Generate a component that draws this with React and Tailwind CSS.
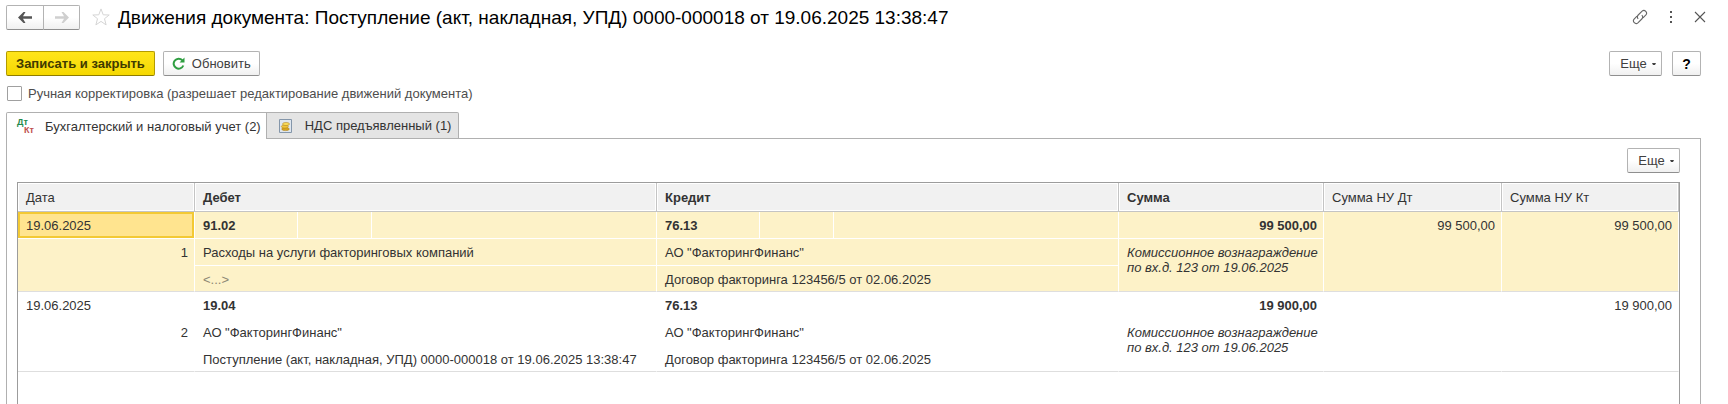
import React from 'react';

const entries = [
  {
    id: 1,
    date: '19.06.2025',
    debit: { account: '91.02', lines: ['Расходы на услуги факторинговых компаний', '<...>'] },
    credit: { account: '76.13', lines: ['АО "ФакторингФинанс"', 'Договор факторинга 123456/5 от 02.06.2025'] },
    sum: '99 500,00',
    comment: ['Комиссионное вознаграждение', 'по вх.д. 123 от 19.06.2025'],
    taxDt: '99 500,00',
    taxKt: '99 500,00',
  },
  {
    id: 2,
    date: '19.06.2025',
    debit: { account: '19.04', lines: ['АО "ФакторингФинанс"', 'Поступление (акт, накладная, УПД) 0000-000018 от 19.06.2025 13:38:47'] },
    credit: { account: '76.13', lines: ['АО "ФакторингФинанс"', 'Договор факторинга 123456/5 от 02.06.2025'] },
    sum: '19 900,00',
    comment: ['Комиссионное вознаграждение', 'по вх.д. 123 от 19.06.2025'],
    taxDt: '',
    taxKt: '19 900,00',
  },
];

const buttonStyle =
  'flex items-center justify-center h-[25px] rounded-xs border border-[#b3b3b3] border-b-[#8f8f8f] bg-linear-to-b from-white from-50% to-[#f0f0f0] text-[#404040]';

const MoreButton = () => (
  <button type="button" aria-haspopup="menu" className={`${buttonStyle} w-[53px] gap-[5px] pl-[5px]`}>
    Еще
    <svg width="4" height="2" viewBox="0 0 4 2" aria-hidden="true">
      <path d="M0 0h4L3 2H1z" fill="#404040" />
    </svg>
  </button>
);

const TitleBar = () => (
  <header className="flex items-center h-6">
    <div className="flex">
      <button type="button" aria-label="Назад" className={`${buttonStyle} w-[38px] rounded-r-none`}>
        <svg width="14" height="11" viewBox="0 0 14 11" fill="#555">
          <path d="M0 5.500L5.500 0h2L5 4.200h9v2.600H5L7.500 11h-2z" />
        </svg>
      </button>
      <button type="button" aria-label="Вперед" className={`${buttonStyle} w-[37px] rounded-l-none -ml-px`}>
        <svg width="14" height="11" viewBox="0 0 14 11" fill="#cfcfcf">
          <path d="M14 5.500L8.500 0h-2L9 4.200H0v2.600h9L6.500 11h2z" />
        </svg>
      </button>
    </div>
    <button type="button" aria-label="В избранное" className="ml-3">
      <svg width="18" height="18" viewBox="0 0 18 18" fill="none" stroke="#d5d5d5">
        <path d="M9 .9l2.200 5.900 6 .2-4.700 3.700 1.600 6.200L9 13.400l-5.100 3.500 1.600-6.200L.8 7l6-.2z" />
      </svg>
    </button>
    <h1 className="ml-2 flex-1 pt-px text-[19px] leading-6 text-black">
      Движения документа: Поступление (акт, накладная, УПД) 0000-000018 от 19.06.2025 13:38:47
    </h1>
    <div className="flex items-center gap-5">
      <button type="button" aria-label="Получить ссылку">
        <svg width="16" height="16" viewBox="0 0 16 16" fill="none" stroke="#666" strokeWidth="1.1">
          <path d="M6.200 9.800C5 8.600 5.200 7 6.200 6l3.900-3.900a2.700 2.700 0 0 1 3.800 3.800L11 8.800" />
          <path d="M9.800 6.200C11 7.400 10.800 9 9.800 10l-3.900 3.900a2.700 2.700 0 0 1-3.800-3.800L5 7.200" />
        </svg>
      </button>
      <button type="button" aria-label="Меню">
        <svg width="6" height="12" viewBox="0 0 6 12" fill="#555">
          <path d="M2 0h2v2H2zM2 5h2v2H2zM2 10h2v2H2z" />
        </svg>
      </button>
      <button type="button" aria-label="Закрыть">
        <svg width="12" height="12" viewBox="0 0 12 12" stroke="#555" strokeWidth="1.1">
          <path d="M1 1l10 10M11 1L1 11" />
        </svg>
      </button>
    </div>
  </header>
);

const Tabs = () => (
  <div role="tablist" className="relative flex h-[27px] -mb-px">
    <button
      type="button"
      role="tab"
      aria-selected="true"
      className="flex items-center pl-[10px] pr-[5px] bg-white border border-b-0 border-[#b0b0b0] rounded-tl-xs"
    >
      <span className="flex flex-col w-[17px] mr-[11px] text-[9px] leading-[8px] font-bold" aria-hidden="true">
        <span className="text-left text-[#1f8a4c]">Дт</span>
        <span className="text-right text-[#c0504d]">Кт</span>
      </span>
      Бухгалтерский и налоговый учет (2)
    </button>
    <button
      type="button"
      role="tab"
      aria-selected="false"
      className="flex items-center pl-3 pr-[7px] bg-[#e4e4e4] border border-l-0 border-[#b0b0b0] rounded-tr-xs"
    >
      <svg className="mr-[13px]" width="13" height="14" viewBox="0 0 13 14" aria-hidden="true">
        <path d="M.5.5h12v13H.5z" fill="#dfe6ee" stroke="#8496aa" />
        <ellipse cx="6.500" cy="10" rx="3.800" ry="1.600" fill="#d8a520" stroke="#a87b12" strokeWidth=".5" />
        <ellipse cx="5.800" cy="7.500" rx="3.500" ry="1.600" fill="#f0c63c" stroke="#a87b12" strokeWidth=".5" />
        <ellipse cx="7" cy="5" rx="3.500" ry="1.600" fill="#f8d95a" stroke="#a87b12" strokeWidth=".5" />
      </svg>
      НДС предъявленный (1)
    </button>
  </div>
);

const HeadCell = ({ children, bold, span }) => (
  <th
    scope="col"
    colSpan={span}
    className={`h-[29px] px-2 text-left bg-[#f1f1f1] border-b border-r border-[#c4c4c4] shadow-[inset_0_0_0_1px_white] ${bold ? 'font-bold' : 'font-normal'}`}
  >
    {children}
  </th>
);

const Entry = ({ entry, selected }) => {
  const line = selected ? 'border-white' : 'border-transparent';
  const cell = `pl-2 pr-[6px] align-top pt-[6px] border-b border-r ${line}`;
  const last = `pl-2 pr-[6px] align-top pt-[6px] border-b border-r ${selected ? 'border-r-white' : 'border-r-transparent'} border-b-[#dedede]`;

  return (
    <tbody className={selected ? 'bg-[#fdf2c8]' : 'bg-white'}>
      <tr className="h-[27px]">
        <td className={`${cell} ${selected ? 'bg-[#ffe48f] shadow-[inset_0_0_0_2px_#f3c934]' : ''}`}>{entry.date}</td>
        <td className={`${cell} font-bold`}>{entry.debit.account}</td>
        <td className={cell} />
        <td className={cell} />
        <td className={`${cell} font-bold`}>{entry.credit.account}</td>
        <td className={cell} />
        <td className={cell} />
        <td className={`${cell} text-right font-bold`}>{entry.sum}</td>
        <td rowSpan={3} className={`${last} text-right`}>{entry.taxDt}</td>
        <td rowSpan={3} className={`${last} text-right`}>{entry.taxKt}</td>
      </tr>
      <tr className="h-[27px]">
        <td rowSpan={2} className={`${last} text-right`}>{entry.id}</td>
        <td colSpan={3} className={cell}>{entry.debit.lines[0]}</td>
        <td colSpan={3} className={cell}>{entry.credit.lines[0]}</td>
        <td rowSpan={2} className={`${last} italic whitespace-nowrap`}>
          {entry.comment[0]}
          <br />
          {entry.comment[1]}
        </td>
      </tr>
      <tr className="h-[26px]">
        <td colSpan={3} className={`${last} ${entry.debit.lines[1] === '<...>' ? 'text-[#8c8774]' : ''}`}>
          {entry.debit.lines[1]}
        </td>
        <td colSpan={3} className={last}>{entry.credit.lines[1]}</td>
      </tr>
    </tbody>
  );
};

const App = () => (
  <div className="min-h-screen flex flex-col pt-[5px] pl-[6px] pr-[27px] bg-white font-['Liberation_Sans',Arial,sans-serif] text-[13px] leading-[15px] text-[#333]">
    <div className="-mr-[22px] pr-[17px]">
      <TitleBar />
    </div>

    {/* Command bar */}
    <div className="flex items-center gap-2 mt-[22px]">
      <button
        type="button"
        className="h-[25px] px-[9px] rounded-xs border border-[#b39b00] border-b-[#8f7d00] bg-linear-to-b from-[#ffe51a] to-[#f5d800] font-bold text-[#403a00]"
      >
        Записать и закрыть
      </button>
      <button type="button" className={`${buttonStyle} gap-[7px] px-2`}>
        <svg width="13" height="13" viewBox="0 0 13 13" fill="none" aria-hidden="true">
          <path d="M10.300 3.200A5 5 0 1 0 11.300 8.500" stroke="#2f9e41" strokeWidth="2" />
          <path d="M12.500.5v5h-5z" fill="#2f9e41" />
        </svg>
        Обновить
      </button>
      <div className="flex gap-[10px] ml-auto">
        <MoreButton />
        <button type="button" aria-label="Справка" className={`${buttonStyle} w-[29px] font-bold text-sm text-black`}>
          ?
        </button>
      </div>
    </div>

    <label className="flex items-center self-start gap-[6px] mt-[10px] ml-px text-[#4d4d4d]">
      <input type="checkbox" className="appearance-none w-[15px] h-[15px] border border-[#a0a0a0] rounded-[1px] bg-white" />
      Ручная корректировка (разрешает редактирование движений документа)
    </label>

    <main className="flex flex-col flex-1 mt-[11px]">
      <Tabs />
      <section className="flex flex-col flex-1 pt-[9px] pl-[10px] pr-[20px] border border-b-0 border-[#b0b0b0]">
        <div className="flex justify-end">
          <MoreButton />
        </div>
        <div className="flex-1 mt-[9px] border border-b-0 border-[#9c9c9c]">
          <table className="w-full table-fixed border-separate border-spacing-0">
            <colgroup>
              <col className="w-[177px]" />
              <col className="w-[103px]" />
              <col className="w-[74px]" />
              <col />
              <col className="w-[103px]" />
              <col className="w-[74px]" />
              <col />
              <col className="w-[205px]" />
              <col className="w-[178px]" />
              <col className="w-[177px]" />
            </colgroup>
            <thead>
              <tr>
                <HeadCell>Дата</HeadCell>
                <HeadCell bold span={3}>Дебет</HeadCell>
                <HeadCell bold span={3}>Кредит</HeadCell>
                <HeadCell bold>Сумма</HeadCell>
                <HeadCell>Сумма НУ Дт</HeadCell>
                <HeadCell>Сумма НУ Кт</HeadCell>
              </tr>
            </thead>
            {entries.map((entry) => (
              <Entry key={entry.id} entry={entry} selected={entry.id === 1} />
            ))}
          </table>
        </div>
      </section>
    </main>
  </div>
);

export default App;
